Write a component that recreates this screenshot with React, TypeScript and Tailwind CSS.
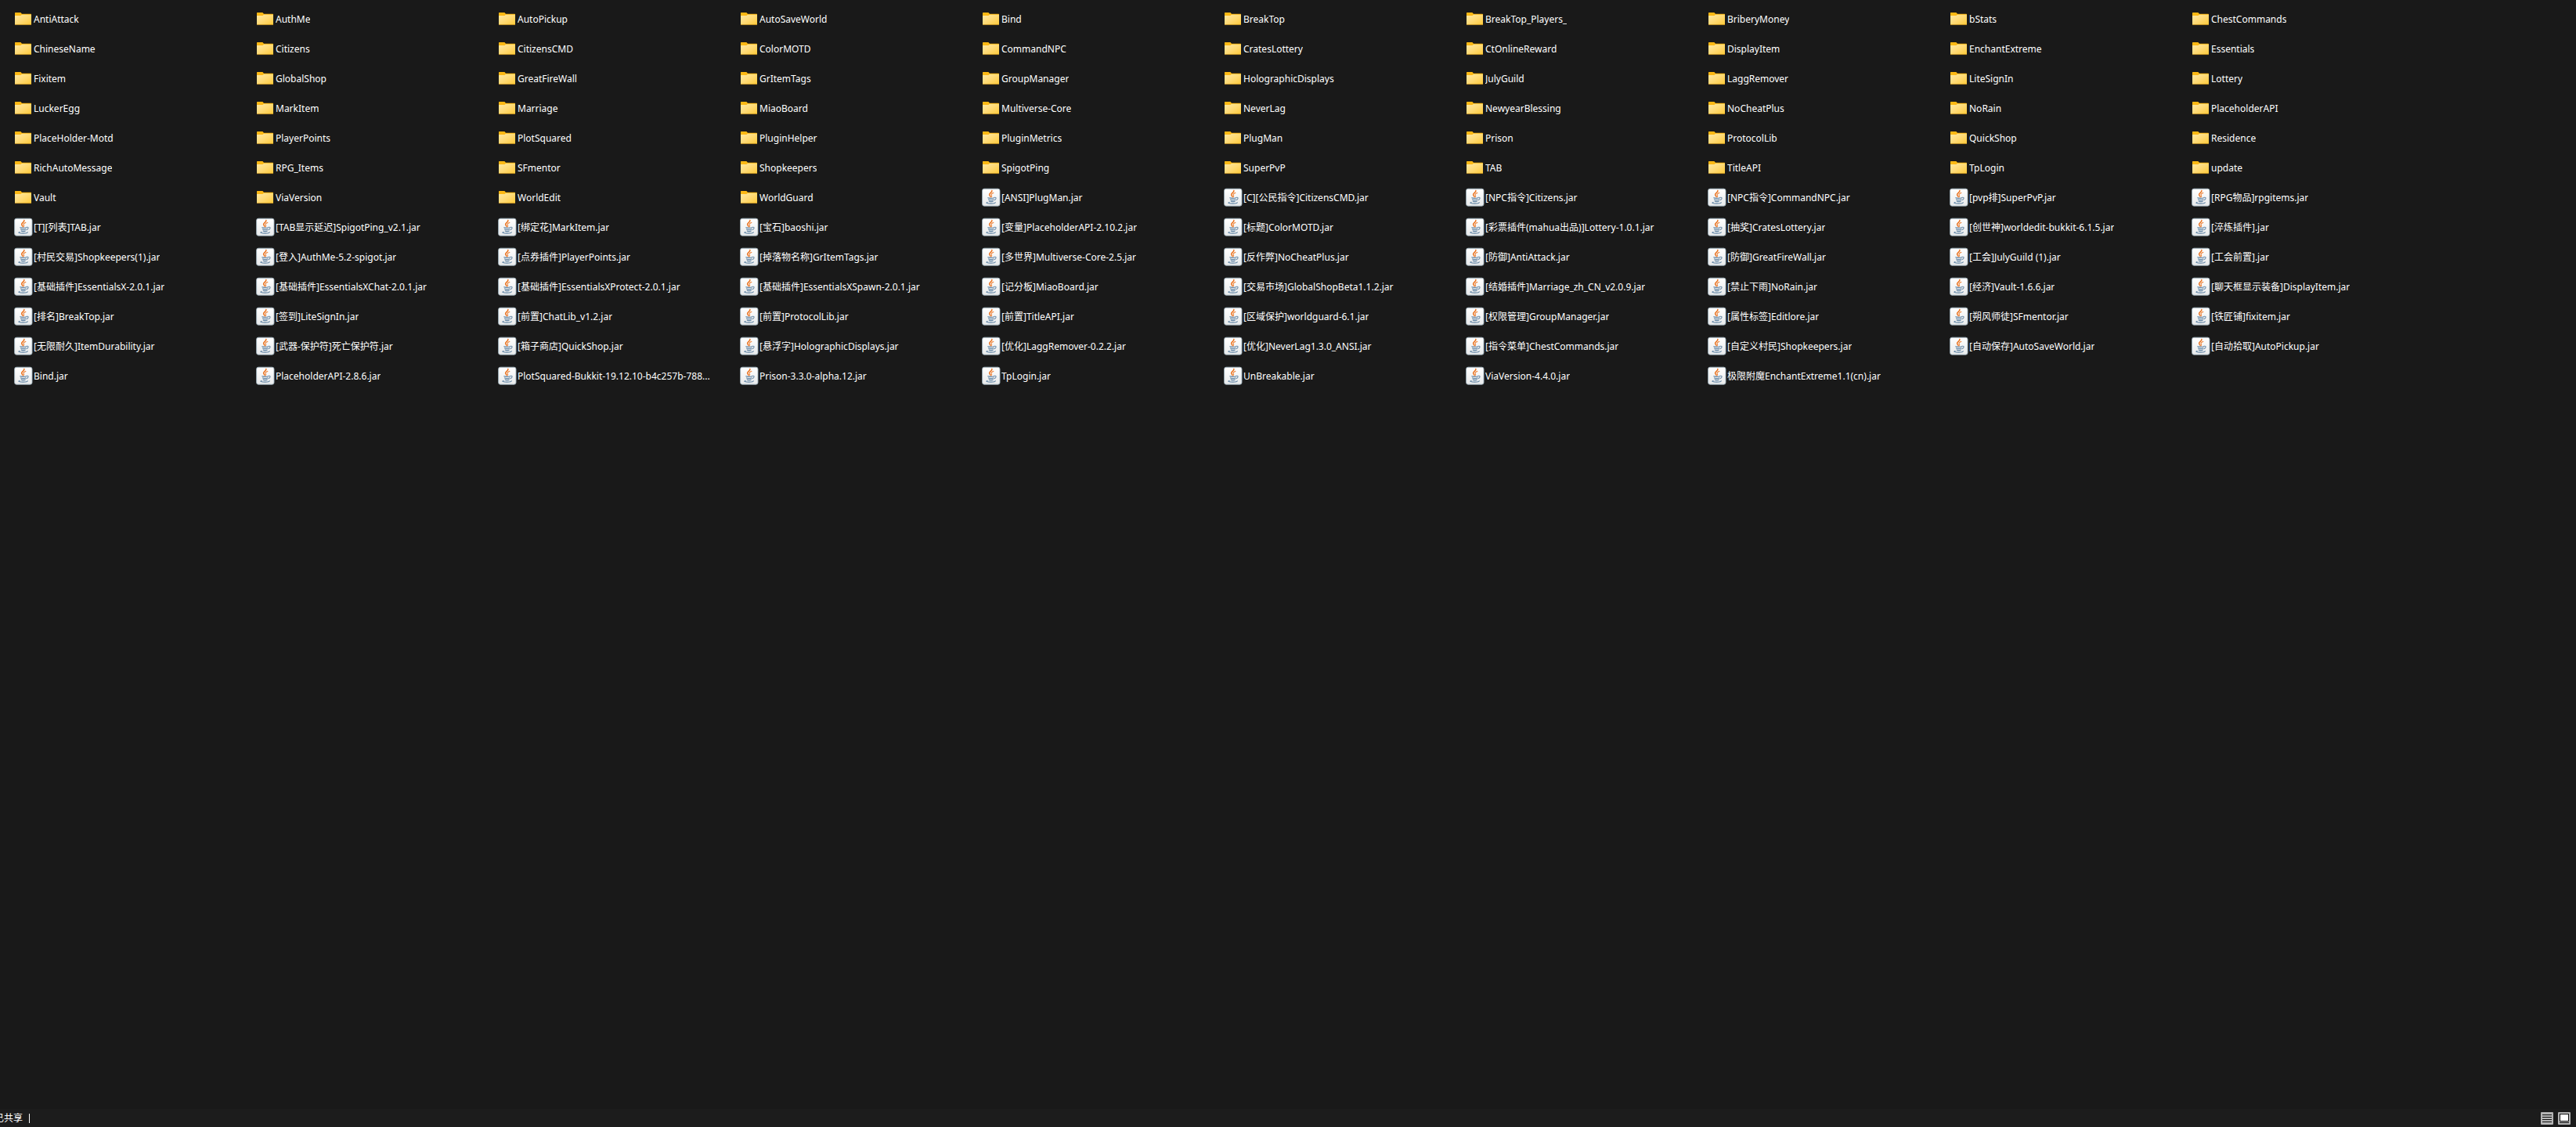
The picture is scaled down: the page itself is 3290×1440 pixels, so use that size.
import React from "react";

const folders = [
  "AntiAttack", "AuthMe", "AutoPickup", "AutoSaveWorld", "Bind", "BreakTop", "BreakTop_Players_", "BriberyMoney", "bStats", "ChestCommands",
  "ChineseName", "Citizens", "CitizensCMD", "ColorMOTD", "CommandNPC", "CratesLottery", "CtOnlineReward", "DisplayItem", "EnchantExtreme", "Essentials",
  "Fixitem", "GlobalShop", "GreatFireWall", "GrItemTags", "GroupManager", "HolographicDisplays", "JulyGuild", "LaggRemover", "LiteSignIn", "Lottery",
  "LuckerEgg", "MarkItem", "Marriage", "MiaoBoard", "Multiverse-Core", "NeverLag", "NewyearBlessing", "NoCheatPlus", "NoRain", "PlaceholderAPI",
  "PlaceHolder-Motd", "PlayerPoints", "PlotSquared", "PluginHelper", "PluginMetrics", "PlugMan", "Prison", "ProtocolLib", "QuickShop", "Residence",
  "RichAutoMessage", "RPG_Items", "SFmentor", "Shopkeepers", "SpigotPing", "SuperPvP", "TAB", "TitleAPI", "TpLogin", "update",
  "Vault", "ViaVersion", "WorldEdit", "WorldGuard",
];

const jars = [
  "[ANSI]PlugMan.jar", "[C][公民指令]CitizensCMD.jar", "[NPC指令]Citizens.jar", "[NPC指令]CommandNPC.jar", "[pvp排]SuperPvP.jar", "[RPG物品]rpgitems.jar",
  "[T][列表]TAB.jar", "[TAB显示延迟]SpigotPing_v2.1.jar", "[绑定花]MarkItem.jar", "[宝石]baoshi.jar", "[变量]PlaceholderAPI-2.10.2.jar",
  "[标题]ColorMOTD.jar", "[彩票插件(mahua出品)]Lottery-1.0.1.jar", "[抽奖]CratesLottery.jar", "[创世神]worldedit-bukkit-6.1.5.jar", "[淬炼插件].jar",
  "[村民交易]Shopkeepers(1).jar", "[登入]AuthMe-5.2-spigot.jar", "[点券插件]PlayerPoints.jar", "[掉落物名称]GrItemTags.jar", "[多世界]Multiverse-Core-2.5.jar",
  "[反作弊]NoCheatPlus.jar", "[防御]AntiAttack.jar", "[防御]GreatFireWall.jar", "[工会]JulyGuild (1).jar", "[工会前置].jar",
  "[基础插件]EssentialsX-2.0.1.jar", "[基础插件]EssentialsXChat-2.0.1.jar", "[基础插件]EssentialsXProtect-2.0.1.jar", "[基础插件]EssentialsXSpawn-2.0.1.jar", "[记分板]MiaoBoard.jar",
  "[交易市场]GlobalShopBeta1.1.2.jar", "[结婚插件]Marriage_zh_CN_v2.0.9.jar", "[禁止下雨]NoRain.jar", "[经济]Vault-1.6.6.jar", "[聊天框显示装备]DisplayItem.jar",
  "[排名]BreakTop.jar", "[签到]LiteSignIn.jar", "[前置]ChatLib_v1.2.jar", "[前置]ProtocolLib.jar", "[前置]TitleAPI.jar",
  "[区域保护]worldguard-6.1.jar", "[权限管理]GroupManager.jar", "[属性标签]Editlore.jar", "[朔风师徒]SFmentor.jar", "[铁匠铺]fixitem.jar",
  "[无限耐久]ItemDurability.jar", "[武器-保护符]死亡保护符.jar", "[箱子商店]QuickShop.jar", "[悬浮字]HolographicDisplays.jar", "[优化]LaggRemover-0.2.2.jar",
  "[优化]NeverLag1.3.0_ANSI.jar", "[指令菜单]ChestCommands.jar", "[自定义村民]Shopkeepers.jar", "[自动保存]AutoSaveWorld.jar", "[自动拾取]AutoPickup.jar",
  "Bind.jar", "PlaceholderAPI-2.8.6.jar", "PlotSquared-Bukkit-19.12.10-b4c257b-788...", "Prison-3.3.0-alpha.12.jar", "TpLogin.jar",
  "UnBreakable.jar", "ViaVersion-4.4.0.jar", "极限附魔EnchantExtreme1.1(cn).jar",
];

function SharedDefs() {
  return (
    <svg width="0" height="0" className="absolute" aria-hidden="true">
      <defs>
        <linearGradient id="folderFront" x1="0" y1="0" x2="1" y2="1">
          <stop offset="0" stopColor="#ffe9a6" />
          <stop offset="0.5" stopColor="#ffda74" />
          <stop offset="1" stopColor="#ffc937" />
        </linearGradient>
        <linearGradient id="jarTile" x1="0" y1="0" x2="0" y2="1">
          <stop offset="0" stopColor="#ffffff" />
          <stop offset="1" stopColor="#e8eaeb" />
        </linearGradient>
      </defs>
    </svg>
  );
}

function FolderIcon() {
  return (
    <svg width="24" height="24" viewBox="0 0 24 24" className="shrink-0" aria-hidden="true">
      <path d="M1 4.6 Q1 4 1.6 4 H8.4 L10 5.8 H21.4 Q22 5.8 22 6.4 V12 H1 Z" fill="#fdb813" />
      <path d="M1 8 H8.4 L10 6.8 H22 V19.4 Q22 20 21.4 20 H1.6 Q1 20 1 19.4 Z" fill="url(#folderFront)" />
      <path d="M1 19.6 H22" stroke="#a97c1c" strokeWidth="0.8" />
    </svg>
  );
}

function JarIcon() {
  return (
    <svg width="24" height="24" viewBox="0 0 24 24" className="shrink-0" aria-hidden="true">
      <rect x="0.6" y="1.2" width="22.4" height="22" rx="2.4" fill="url(#jarTile)" stroke="#9fb2bd" strokeWidth="0.9" />
      <g fill="none" strokeLinecap="round">
        <path d="M12.9 3.4 C13.6 5.8 9.2 6.8 9.6 8.8 C9.8 10 11 10.4 11.2 11.6" stroke="#ea7422" strokeWidth="1.5" />
        <path d="M14.8 6.4 C12.6 7.2 11.6 8.2 12.2 9.3 C12.8 10.2 12.9 10.8 12 11.8" stroke="#ef8b45" strokeWidth="1.2" />
        <path d="M7.8 12.8 C9.4 13.5 13.6 13.5 15.6 12.7" stroke="#5f83a3" strokeWidth="1.2" />
        <path d="M8.6 15 C10.2 15.6 13.2 15.6 14.8 15" stroke="#5f83a3" strokeWidth="1.3" />
        <path d="M9.3 17.1 C10.5 17.7 12.9 17.7 14.2 17.1" stroke="#5f83a3" strokeWidth="1.2" />
        <path d="M16.2 12.3 C18.8 11.7 18.8 14.5 15.9 15.7" stroke="#6f8fab" strokeWidth="1.1" />
        <path d="M7 18.4 C4.6 19.2 6.4 20.1 11.5 20.1 C15.6 20.1 17.4 19.5 17.2 18.6" stroke="#5f83a3" strokeWidth="1.1" />
      </g>
    </svg>
  );
}

function Entry({ name, jar }: { name: string; jar?: boolean }) {
  return (
    <li className="flex h-[38px] min-w-0 items-center gap-px pr-4">
      {jar ? <JarIcon /> : <FolderIcon />}
      <span className="truncate pt-0.5">{name}</span>
    </li>
  );
}

export default function App() {
  return (
    <div className="flex min-h-screen flex-col overflow-hidden bg-[#191919] font-['Noto_Sans','Noto_Sans_CJK_SC',sans-serif] text-xs leading-4 text-white">
      <SharedDefs />
      <main className="flex-1 pt-[5px] pl-[18px]">
        <ul className="grid grid-cols-[repeat(auto-fill,309px)]">
          {folders.map((name) => (
            <Entry key={name} name={name} />
          ))}
          {jars.map((name) => (
            <Entry key={name} name={name} jar />
          ))}
        </ul>
      </main>
      <footer className="flex h-[23px] items-center justify-between bg-[#1c1c1c] pr-[7px]">
        <div className="-ml-[7px] flex items-center gap-2">
          <span>已共享</span>
          <span className="h-3 w-px bg-white" />
        </div>
        <div className="flex gap-[6px]">
          <button type="button" aria-label="Details view" className="size-4">
            <svg width="16" height="16" viewBox="0 0 16 16" aria-hidden="true">
              <rect width="16" height="16" rx="1" fill="#b4b4b4" />
              <path d="M2 3.5H14M2 6.5H14M2 9.5H14M2 12.5H14" stroke="#111" />
            </svg>
          </button>
          <button type="button" aria-label="Large icons view" className="size-4">
            <svg width="16" height="16" viewBox="0 0 16 16" aria-hidden="true">
              <rect width="16" height="16" rx="1" fill="#b4b4b4" />
              <rect x="2.5" y="2.5" width="11" height="9" fill="#fff" stroke="#111" />
              <path d="M2 13.5H14" stroke="#111" />
            </svg>
          </button>
        </div>
      </footer>
    </div>
  );
}
